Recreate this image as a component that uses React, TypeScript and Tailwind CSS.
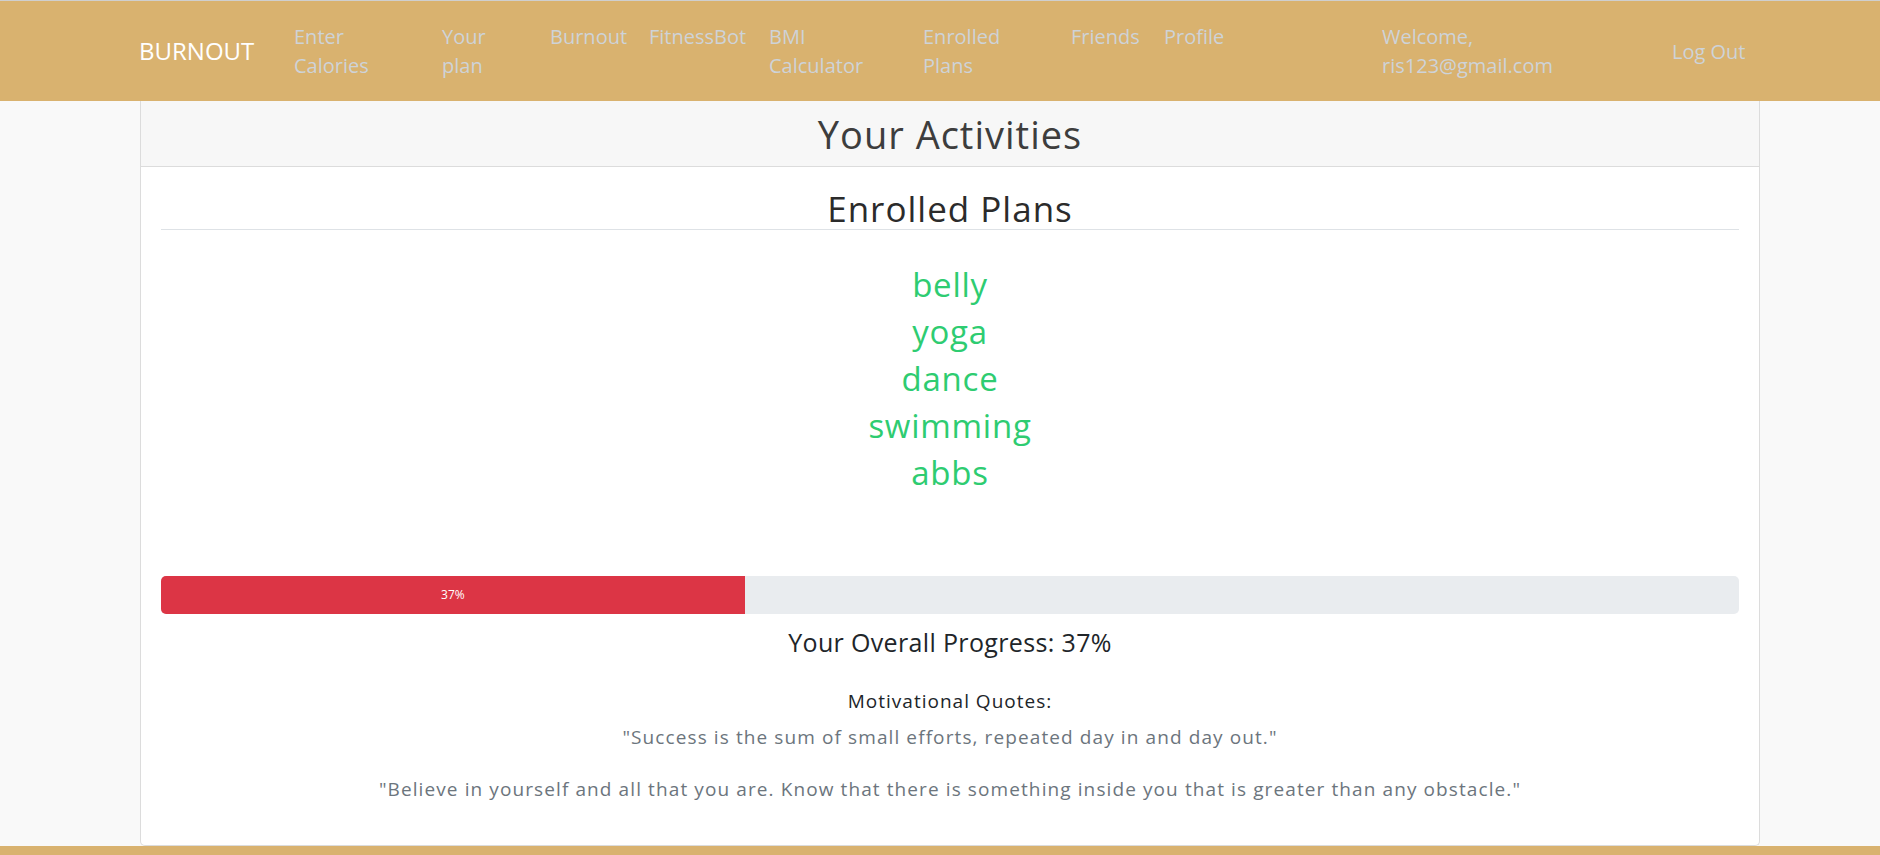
import React from 'react'

const navItems = [
  { lines: ['Enter', 'Calories'], w: 'w-[148px]' },
  { lines: ['Your', 'plan'], w: 'w-[108px]' },
  { lines: ['Burnout'], w: 'w-[99px]' },
  { lines: ['FitnessBot'], w: 'w-[120px]' },
  { lines: ['BMI', 'Calculator'], w: 'w-[154px]' },
  { lines: ['Enrolled', 'Plans'], w: 'w-[148px]' },
  { lines: ['Friends'], w: 'w-[93px]' },
  { lines: ['Profile'], w: 'w-[218px]' },
]

const plans = ['belly', 'yoga', 'dance', 'swimming', 'abbs']

export default function App() {
  const progress = 37

  return (
    <div className="min-h-screen bg-[#f9f9f9] font-['Open_Sans',sans-serif]">
      <nav className="flex h-[101px] items-center border-t border-[#cfcfcf] bg-[#d9b26f] pl-[139px]">
        <a className="w-[155px] text-[24px] leading-none text-white">BURNOUT</a>
        <ul className="flex items-start text-[20px] leading-[29px] text-[#ced3d8]">
          {navItems.map((item) => (
            <li key={item.lines.join(' ')} className={item.w}>
              {item.lines.map((l) => (
                <span key={l} className="block">{l}</span>
              ))}
            </li>
          ))}
          <li className="w-[290px]">
            <span className="block">Welcome,</span>
            <span className="block">ris123@gmail.com</span>
          </li>
        </ul>
        <a className="text-[20px] leading-[29px] text-[#ced3d8]">Log Out</a>
      </nav>

      <div className="ml-[140px] w-[1620px] rounded-b-[5px] border border-t-0 border-[#dcdcdc] bg-white">
        <div className="flex h-[66px] items-center justify-center border-b border-[#dcdcdc] bg-[#f7f7f7]">
          <h1 className="text-[38px] font-medium leading-none tracking-[1px] text-[#3d3d3d]">Your Activities</h1>
        </div>

        <div className="px-[20px] pb-[42px] text-center">
          <h2 className="mt-[21px] border-b border-[#dee2e6] text-[35px] font-medium leading-[41px] tracking-[1px] text-[#2b2b2b]">Enrolled Plans</h2>

          <div className="mt-[31px]">
            {plans.map((p) => (
              <p key={p} className="text-[33px] leading-[47px] tracking-[0.75px] text-[#2ecc71]">{p}</p>
            ))}
          </div>

          <div className="mt-[80px] flex h-[38px] overflow-hidden rounded-[5px] bg-[#e9ecef]">
            <div className="flex items-center justify-center bg-[#dc3545] text-[12px] text-white" style={{ width: `${progress}%` }}>
              {progress}%
            </div>
          </div>

          <p className="mt-[10px] text-[25px] leading-[36px] tracking-[0.35px] text-[#212529]">Your Overall Progress: {progress}%</p>

          <p className="mt-[28px] text-[19px] font-medium leading-[27px] tracking-[1px] text-[#212529]">Motivational Quotes:</p>
          <p className="mt-[9px] text-[19px] leading-[27px] tracking-[1.1px] text-[#6c757d]">"Success is the sum of small efforts, repeated day in and day out."</p>
          <p className="mt-[25px] text-[19px] leading-[27px] tracking-[1.1px] text-[#6c757d]">
            "Believe in yourself and all that you are. Know that there is something inside you that is greater than any obstacle."
          </p>
        </div>
      </div>

      <footer className="h-[80px] bg-[#d9b26f]" />
    </div>
  )
}
